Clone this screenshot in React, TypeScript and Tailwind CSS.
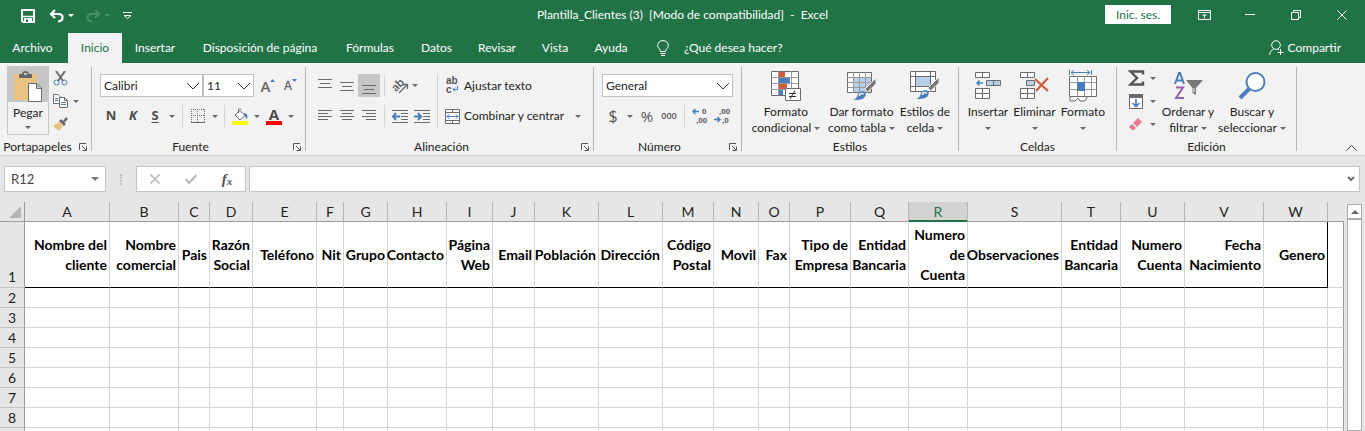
import React from "react";
import type { ReactNode } from "react";

const GRAY = "#6b6b6b";
const BLUE = "#4a7ebb";

function Svg({ w, h, children, stroke = GRAY }: { w: number; h: number; children: ReactNode; stroke?: string }) {
  return (
    <svg width={w} height={h} viewBox={`0 0 ${w} ${h}`} fill="none" stroke={stroke} className="block shrink-0" aria-hidden="true">
      {children}
    </svg>
  );
}

function Caret({ color = "#666" }: { color?: string }) {
  return (
    <svg width="6" height="3" viewBox="0 0 6 3" fill={color} className="block shrink-0" aria-hidden="true">
      <path d="M0 0H6L3 3Z" />
    </svg>
  );
}

function IconButton({ label, className = "w-[22px] h-[22px]", children }: { label: string; className?: string; children: ReactNode }) {
  return (
    <button type="button" aria-label={label} className={`flex shrink-0 items-center justify-center ${className}`}>
      {children}
    </button>
  );
}

function CaretButton({ label, className = "w-3" }: { label: string; className?: string }) {
  return (
    <IconButton label={label} className={`h-[22px] ${className}`}>
      <Caret />
    </IconButton>
  );
}

function Divider({ className = "h-[22px]" }: { className?: string }) {
  return <span className={`w-px shrink-0 bg-[#d2d2d2] ${className}`} />;
}

function Group({ title, width, launcher, children }: { title: string; width: string; launcher?: boolean; children: ReactNode }) {
  return (
    <section aria-label={title} className={`flex shrink-0 pt-1 ${width}`}>
      <div className="flex min-w-0 flex-1 flex-col">
        <div className="flex flex-1 items-start">{children}</div>
        <div className="flex h-4 items-center">
          <h2 className="flex-1 whitespace-nowrap text-center text-[12px] leading-4">{title}</h2>
          {launcher && (
            <IconButton label={`Opciones de ${title}`} className="h-4 w-4">
              <Svg w={8} h={8} stroke="#555">
                <path d="M.5 7V.5H7M3 3L7 7M7.5 3.5V7.5H3.5" />
              </Svg>
            </IconButton>
          )}
        </div>
      </div>
      <span className="mb-1 w-px bg-[#b4b4b4]" />
    </section>
  );
}

function BigButton({ icon, line1, line2, width }: { icon: ReactNode; line1: string; line2?: string; width: string }) {
  return (
    <button type="button" className={`flex shrink-0 flex-col items-center text-[12px] leading-4 ${width}`}>
      <span className="flex h-[37px] items-center justify-center">{icon}</span>
      <span className="whitespace-nowrap">{line1}</span>
      <span className="flex h-4 items-center gap-[3px] whitespace-nowrap">
        {line2}
        <Caret />
      </span>
    </button>
  );
}

function Lines({ rows }: { rows: [number, number, number][] }) {
  return (
    <Svg w={14} h={14}>
      {rows.map(([x1, x2, y]) => (
        <path key={y} d={`M${x1} ${y + 0.5}H${x2}`} />
      ))}
    </Svg>
  );
}

function BrushTip() {
  return (
    <>
      <path d="M29 6L18 17L20.500 20L29 12Z" fill="#787878" stroke="#f2f2f2" />
      <path d="M6 28C12 27 9 20 15 19C19 19 20 23 17 26C14 28 10 28 6 28Z" fill={BLUE} stroke="none" />
      <path d="M12.500 24C12 21 16 21 16.500 22.500" stroke="#f2f2f2" strokeWidth="1.500" />
    </>
  );
}

function FieldSelect({ label, value, width }: { label: string; value: string; width: string }) {
  return (
    <div className={`relative shrink-0 ${width}`}>
      <select
        aria-label={label}
        defaultValue={value}
        className="block h-[23px] w-full appearance-none border border-[#c0c0c0] bg-white pl-[3px] pr-5 text-[12px] leading-4 text-[#222] outline-none"
      >
        <option>{value}</option>
      </select>
      <span className="pointer-events-none absolute right-[3px] top-2">
        <Svg w={14} h={8} stroke="#333">
          <path d="M1 1L7 7L13 1" />
        </Svg>
      </span>
    </div>
  );
}

function TitleBar() {
  return (
    <header className="grid h-[33px] grid-cols-[1fr_auto_1fr] items-center pb-1 text-white">
      <div className="flex items-center pl-[21px] pt-[2px]">
        <IconButton label="Guardar" className="mr-[14px] h-5 w-[14px]">
          <svg width="14" height="14" viewBox="0 0 14 14" fill="none" stroke="#fff" strokeWidth="2" className="block">
            <path d="M1 1H13V13H2L1 12Z" />
            <path d="M1 7.5H13" strokeWidth="1.5" />
            <path d="M3 9H11V13H3Z" fill="#fff" stroke="none" />
            <path d="M5 10.5H7V13H5Z" fill="#217346" stroke="none" />
          </svg>
        </IconButton>
        <IconButton label="Deshacer" className="h-5 w-4">
          <svg width="16" height="14" viewBox="0 0 16 14" fill="none" stroke="#fff" strokeWidth="2.2" className="block">
            <path d="M6 1L2 5L6 9M2.5 5H9.5C15 5 15 12 9 12.5" />
          </svg>
        </IconButton>
        <IconButton label="Opciones de deshacer" className="h-5 w-3"><Caret color="#fff" /></IconButton>
        <IconButton label="Rehacer" className="ml-2 h-5 w-4">
          <svg width="16" height="14" viewBox="0 0 16 14" fill="none" stroke="#4a9168" strokeWidth="2" className="block">
            <path d="M10 1L14 5L10 9M13.5 5H6.5C1 5 1 12 7 12.5" />
          </svg>
        </IconButton>
        <IconButton label="Opciones de rehacer" className="h-5 w-3"><Caret color="#4a9168" /></IconButton>
        <IconButton label="Personalizar barra" className="ml-2 h-5 w-3">
          <Svg w={9} h={8} stroke="#fff"><path d="M0 .5H9M1 3.5H8L4.5 6.5Z" /></Svg>
        </IconButton>
      </div>
      <h1 className="whitespace-pre text-[12px] leading-4">{"Plantilla_Clientes (3)  [Modo de compatibilidad]  -  Excel"}</h1>
      <div className="flex items-center justify-end">
        <button type="button" className="mr-[26px] h-[19px] w-[66px] bg-white text-[12px] leading-4 text-[#217346]">Inic. ses.</button>
        <IconButton label="Opciones de la cinta" className="h-5 w-[14px]">
          <Svg w={13} h={10} stroke="#fff"><path d="M.5 .5H12.5V9.5H.5ZM.5 2.5H12.5M6.5 8.5V4.5M4.5 6L6.5 4L8.5 6" /></Svg>
        </IconButton>
        <IconButton label="Minimizar" className="ml-4 h-5 w-[46px]">
          <Svg w={10} h={1} stroke="#fff"><path d="M0 .5H10" /></Svg>
        </IconButton>
        <IconButton label="Restaurar" className="h-5 w-[46px]">
          <Svg w={10} h={10} stroke="#fff"><path d="M.5 2.5H7.5V9.5H.5ZM2.5 2V.5H9.5V7.5H8" /></Svg>
        </IconButton>
        <IconButton label="Cerrar" className="h-5 w-[46px]">
          <Svg w={10} h={10} stroke="#fff"><path d="M.5 .5L9.5 9.5M9.5 .5L.5 9.5" /></Svg>
        </IconButton>
      </div>
    </header>
  );
}

const TABS: [string, string][] = [
  ["Archivo", "w-[68px] pr-[3px]"],
  ["Inicio", "w-[54px] bg-[#f2f2f2] text-[#217346]"],
  ["Insertar", "w-[66px]"],
  ["Disposición de página", "w-[144px]"],
  ["Fórmulas", "w-[76px]"],
  ["Datos", "w-[57px]"],
  ["Revisar", "w-[64px]"],
  ["Vista", "w-[52px]"],
  ["Ayuda", "w-[60px]"],
];

function TabBar() {
  return (
    <nav aria-label="Cinta de opciones" className="flex h-[30px] items-stretch text-[12px] leading-4 text-white">
      {TABS.map(([name, cls]) => (
        <button key={name} type="button" className={`shrink-0 whitespace-nowrap text-center ${cls}`}>{name}</button>
      ))}
      <button type="button" className="ml-4 flex items-center gap-[15px] whitespace-nowrap">
        <Svg w={12} h={16} stroke="#fff">
          <path d="M3.500 11.500C3.500 9 .7 8.500 .7 5.500C.7 2.500 3 .6 6 .6C9 .6 11.300 2.500 11.300 5.500C11.300 8.500 8.500 9 8.500 11.500ZM3.500 13.500H8.500M4 15.500H8" />
        </Svg>
        ¿Qué desea hacer?
      </button>
      <button type="button" className="ml-auto mr-6 flex items-center gap-1 whitespace-nowrap">
        <Svg w={15} h={16} stroke="#fff">
          <circle cx="7" cy="5" r="4.300" />
          <path d="M.7 15C.7 12 2.500 10.300 4.500 9M9 9L10 10M11.500 9V15M8.500 12.500H14.500" />
        </Svg>
        Compartir
      </button>
    </nav>
  );
}

function Clipboard() {
  return (
    <Group title="Portapapeles" width="w-[92px]" launcher>
      <button type="button" className="-mt-px ml-[7px] flex h-[69px] w-[42px] shrink-0 flex-col items-center border border-[#c6c6c6] text-[12px] leading-4">
        <span className="flex h-[35px] w-full shrink-0 items-center justify-center bg-[#c6c6c6] pt-1">
          <Svg w={28} h={31}>
            <path d="M0 3H23V29H0Z" fill="#eac282" stroke="none" />
            <path d="M5 3H8C8 -1 15 -1 15 3H18V7H5Z" fill="#686868" stroke="none" />
            <path d="M10 2H13V4H10Z" fill="#c6c6c6" stroke="none" />
            <path d="M14.500 12.500H23L27.500 17V30.500H14.500ZM22.500 12.500V17.500H27.500" fill="#fff" />
          </Svg>
        </span>
        <span className="pt-[3px]">Pegar</span>
        <span className="flex flex-1 items-center"><Caret /></span>
      </button>
      <div className="ml-[3px] flex flex-col gap-[1px]">
        <IconButton label="Cortar" className="h-[22px] w-4">
          <Svg w={15} h={15}>
            <path d="M3 0L10 10M12 0L5 10" strokeWidth="2" />
            <circle cx="3.500" cy="11.500" r="2.500" stroke={BLUE} /><circle cx="11.500" cy="11.500" r="2.500" stroke={BLUE} />
          </Svg>
        </IconButton>
        <div className="flex">
          <IconButton label="Copiar" className="h-[22px] w-4">
            <Svg w={15} h={14}>
              <path d="M.5 .5H5L7.500 3V9.500H.5Z" fill="#fff" />
              <path d="M6.500 3.500H11.500L14.500 6.500V13.500H6.500ZM11.500 3.500V6.500H14.500" fill="#fff" />
              <path d="M2 4.500H5M2 6.500H5M8 8.500H13M8 10.500H13" stroke={BLUE} />
            </Svg>
          </IconButton>
          <CaretButton label="Opciones de copiar" className="w-4" />
        </div>
        <IconButton label="Copiar formato" className="h-[22px] w-4">
          <Svg w={15} h={14}>
            <path d="M0 9L6 5L10 9L6 14Z" fill="#eac282" stroke="none" />
            <path d="M6 4L8 2L13 7L11 9ZM10 4L13 0L15 2L11 6Z" fill="#686868" stroke="none" />
          </Svg>
        </IconButton>
      </div>
    </Group>
  );
}

function FontGroup() {
  return (
    <Group title="Fuente" width="w-[214px]" launcher>
      <div className="flex w-full flex-col gap-2 pl-2 pt-[7px]">
        <div className="flex items-center">
          <FieldSelect label="Fuente" value="Calibri" width="w-[103px]" />
          <FieldSelect label="Tamaño de fuente" value="11" width="w-[51px]" />
          <IconButton label="Aumentar tamaño" className="ml-[5px] h-[22px] w-[18px] font-['Open_Sans',sans-serif] text-[15px] font-semibold leading-5 text-[#666]">
            A<Svg w={5} h={14}><path d="M0 3H5L2.500 0Z" fill={BLUE} stroke="none" /></Svg>
          </IconButton>
          <IconButton label="Reducir tamaño" className="ml-[5px] h-[22px] w-[17px] font-['Open_Sans',sans-serif] text-[12px] font-semibold leading-5 text-[#666]">
            A<Svg w={5} h={14}><path d="M0 0H5L2.500 3Z" fill={BLUE} stroke="none" /></Svg>
          </IconButton>
        </div>
        <div className="flex items-center font-['Open_Sans',sans-serif] text-[13px] font-bold text-[#4c4c4c]">
          <IconButton label="Negrita">N</IconButton>
          <IconButton label="Cursiva"><span className="italic">K</span></IconButton>
          <IconButton label="Subrayado"><span className="underline underline-offset-2">S</span></IconButton>
          <CaretButton label="Tipos de subrayado" />
          <Divider className="ml-1 h-[22px]" />
          <IconButton label="Bordes" className="ml-1 h-[22px] w-[22px]">
            <Svg w={14} h={14}>
              <path d="M0 .5H14M0 6.500H14M.5 0V13M6.500 0V13M13.500 0V13" strokeDasharray="1 1" />
              <path d="M0 13.500H14" />
            </Svg>
          </IconButton>
          <CaretButton label="Opciones de borde" />
          <Divider className="ml-[3px] h-[22px]" />
          <IconButton label="Color de relleno" className="ml-1 h-[22px] w-[22px]">
            <Svg w={16} h={17}>
              <path d="M3 7L8 2.500L13 7.500L8 12ZM6.500 5V1.500C6.500 .5 9 .5 9 2" fill="#fff" />
              <path d="M12 5C15 5 16 8 15 11C13.500 10 13.500 8 12 7Z" fill={BLUE} stroke="none" />
              <path d="M0 13H16V17H0Z" fill="#ffff00" stroke="none" />
            </Svg>
          </IconButton>
          <CaretButton label="Colores de relleno" />
          <IconButton label="Color de fuente" className="h-[22px] w-[22px]">
            <span className="flex flex-col items-center text-[15px] leading-[13px]">A<span className="h-1 w-4 bg-[#f00]" /></span>
          </IconButton>
          <CaretButton label="Colores de fuente" />
        </div>
      </div>
    </Group>
  );
}

function AlignGroup() {
  return (
    <Group title="Alineación" width="w-[288px]" launcher>
      <div className="flex pl-2 pt-[7px]">
        <div className="flex flex-col gap-2">
          <div className="flex items-center">
            <IconButton label="Alinear arriba"><Lines rows={[[0, 14, 0], [2, 12, 4], [0, 14, 8]]} /></IconButton>
            <IconButton label="Alinear en el medio"><Lines rows={[[0, 14, 3], [2, 12, 7], [0, 14, 11]]} /></IconButton>
            <IconButton label="Alinear abajo" className="h-[23px] w-[22px] bg-[#c6c6c6] pt-[7px]"><Lines rows={[[0, 14, 3], [2, 12, 7], [0, 14, 11]]} /></IconButton>
            <Divider className="ml-1 h-[22px]" />
            <IconButton label="Orientación" className="ml-[4px] h-[22px] w-[22px]">
              <svg width="17" height="16" viewBox="0 0 17 16" className="block overflow-visible" aria-hidden="true">
                <text x="0" y="11" transform="rotate(-45 6 8)" fontSize="12" fontWeight="700" fill="#666">ab</text>
                <path d="M7 15L15 7M11 6.500H15.500V11" fill="none" stroke="#666" strokeWidth="1.300" />
              </svg>
            </IconButton>
            <CaretButton label="Opciones de orientación" className="w-2" />
          </div>
          <div className="flex items-center">
            <IconButton label="Alinear a la izquierda"><Lines rows={[[0, 14, 1], [0, 10, 4], [0, 14, 7], [0, 10, 10]]} /></IconButton>
            <IconButton label="Centrar"><Lines rows={[[0, 14, 1], [2, 12, 4], [0, 14, 7], [2, 12, 10]]} /></IconButton>
            <IconButton label="Alinear a la derecha"><Lines rows={[[0, 14, 1], [4, 14, 4], [0, 14, 7], [4, 14, 10]]} /></IconButton>
            <Divider className="ml-1 h-[22px]" />
            <IconButton label="Disminuir sangría" className="ml-[4px] h-[22px] w-[22px]">
              <Svg w={16} h={13}>
                <path d="M0 .5H16M9 3.500H16M9 6.500H16M9 9.500H16M0 12.500H16" />
                <path d="M8 6.500H1M4 3L1 6.500L4 10" stroke={BLUE} strokeWidth="2" />
              </Svg>
            </IconButton>
            <IconButton label="Aumentar sangría">
              <Svg w={16} h={13}>
                <path d="M0 .5H16M9 3.500H16M9 6.500H16M9 9.500H16M0 12.500H16" />
                <path d="M0 6.500H7M4 3L7 6.500L4 10" stroke={BLUE} strokeWidth="2" />
              </Svg>
            </IconButton>
          </div>
        </div>
        <Divider className="ml-1 h-[54px]" />
        <div className="flex flex-col gap-2 pl-[7px] text-[12px] leading-4">
          <button type="button" className="flex h-[23px] items-center gap-1 whitespace-nowrap">
            <svg width="15" height="17" viewBox="0 0 15 17" className="block overflow-visible" aria-hidden="true">
              <g fontFamily="Liberation Sans, sans-serif" fontSize="10" fontWeight="700" fill="#555">
                <text x="1" y="7">ab</text>
                <text x="1" y="16">c</text>
              </g>
              <path d="M12.500 9V12.500H8M10 10.500L8 12.500L10 14.500" fill="none" stroke={BLUE} />
            </svg>
            Ajustar texto
          </button>
          <div className="flex h-[22px] items-center">
            <button type="button" className="flex items-center gap-1 whitespace-nowrap">
              <Svg w={15} h={15}>
                <path d="M.5 .5H14.500V14.500H.5ZM.5 3.500H14.500M.5 11.500H14.500M7.500 .5V3.500M7.500 11.500V14.500" fill="#fff" />
                <path d="M2 7.500H13M4.500 5L2 7.500L4.500 10M10.500 5L13 7.500L10.500 10" stroke={BLUE} />
              </Svg>
              Combinar y centrar
            </button>
            <CaretButton label="Opciones de combinar" className="ml-2 w-3" />
          </div>
        </div>
      </div>
    </Group>
  );
}

function DecimalIcon({ more }: { more: boolean }) {
  return (
    <svg width="16" height="16" viewBox="0 0 16 16" className="block overflow-visible" aria-hidden="true">
      <g fontFamily="Liberation Sans, sans-serif" fontSize="8" fontWeight="700" fill="#555">
        <text x={more ? 10 : 5} y="6">{more ? "0" : ",00"}</text>
        <text x={more ? 4 : 8} y="15">{more ? ",00" : ",0"}</text>
      </g>
      <path d={more ? "M7 3.500H1M3.500 1L1 3.500L3.500 6" : "M0 11.500H6M3.500 9L6 11.500L3.500 14"} fill="none" stroke={BLUE} strokeWidth="1.500" />
    </svg>
  );
}

function NumberGroup() {
  return (
    <Group title="Número" width="w-[148px]" launcher>
      <div className="flex w-full flex-col gap-2 px-2 pt-[7px]">
        <FieldSelect label="Formato de número" value="General" width="w-full" />
        <div className="flex items-center font-['Open_Sans',sans-serif] text-[#555]">
          <IconButton label="Moneda" className="h-[22px] w-[22px] text-[16px]">$</IconButton>
          <CaretButton label="Opciones de moneda" />
          <IconButton label="Porcentaje" className="h-[22px] w-[22px] text-[15px]">%</IconButton>
          <IconButton label="Estilo millares" className="h-[22px] w-[22px] text-[9px] font-semibold">000</IconButton>
          <Divider className="ml-[4px] h-[22px]" />
          <IconButton label="Aumentar decimales" className="ml-1 h-[22px] w-[22px]"><DecimalIcon more /></IconButton>
          <IconButton label="Disminuir decimales"><DecimalIcon more={false} /></IconButton>
        </div>
      </div>
    </Group>
  );
}

function StylesGroup() {
  return (
    <Group title="Estilos" width="w-[217px]">
      <BigButton
        width="w-[88px]" line1="Formato" line2="condicional"
        icon={
          <Svg w={30} h={31}>
            <path d="M.5 1.500H27.500V25.500H.5Z" fill="#fff" />
            <path d="M8 2H14V7H8ZM8 14H16V19H8Z" fill="#d35b3c" stroke="none" />
            <path d="M8 8H19V13H8ZM8 20H12V25H8Z" fill={BLUE} stroke="none" />
            <path d="M.5 7.500H27.500M.5 13.500H27.500M.5 19.500H27.500M7.500 1V25M20.500 1V25" stroke="#999" />
            <path d="M14.500 18.500H29.500V30.500H14.500Z" fill="#fff" />
            <path d="M18 23.500H25M18 26.500H25M24 20.500L19 29" stroke="#333" />
          </Svg>
        }
      />
      <BigButton
        width="w-[63px]" line1="Dar formato" line2="como tabla"
        icon={
          <Svg w={30} h={31}>
            <g transform="translate(0 2)">
              <path d="M.5 .5H24.500V20.500H.5Z" fill="#fff" />
              <path d="M6 6H24V20H6Z" fill="#b8cfe8" stroke="none" />
              <path d="M.5 5.500H24.500M.5 10.500H24.500M.5 15.500H24.500M6.500 0V21M12.500 0V21M18.500 0V21" stroke="#999" />
              <BrushTip />
            </g>
          </Svg>
        }
      />
      <BigButton
        width="w-[64px]" line1="Estilos de" line2="celda"
        icon={
          <Svg w={30} h={29}>
            <path d="M.5 .5H25.500V20.500H.5ZM.5 5.500H25.500M.5 15.500H25.500M5.500 0V21M20.500 0V21" fill="#fff" />
            <path d="M6 6H20V15H6Z" fill="#b8cfe8" stroke="none" />
            <BrushTip />
          </Svg>
        }
      />
    </Group>
  );
}

function CellsGroup() {
  return (
    <Group title="Celdas" width="w-[158px]">
      <span className="w-[6px] shrink-0" />
      <BigButton
        width="w-[46px]" line1="Insertar"
        icon={
          <Svg w={26} h={27}>
            <path d="M.5 .5H14.500V5.500H.5ZM7.500 .5V5.500M.5 16.500H14.500V26.500H.5ZM7.500 16.500V26.500M.5 21.500H14.500" fill="#fff" />
            <path d="M11.500 8.500H25.500V13.500H11.500ZM18.500 8.500V13.500" fill="#b8cfe8" />
            <path d="M8 11H2M4.500 8.500L2 11L4.500 13.500" stroke={BLUE} strokeWidth="1.500" />
          </Svg>
        }
      />
      <BigButton
        width="w-[47px]" line1="Eliminar"
        icon={
          <Svg w={29} h={27}>
            <path d="M.5 .5H14.500V5.500H.5ZM7.500 .5V5.500M.5 16.500H14.500V26.500H.5ZM7.500 16.500V26.500M.5 21.500H14.500" fill="#fff" />
            <path d="M6.500 8.500H14.500V13.500H6.500Z" fill="#b8cfe8" />
            <path d="M15 7L28 19M28 6L16 19" stroke="#d35b3c" strokeWidth="2.200" />
          </Svg>
        }
      />
      <BigButton
        width="w-[50px]" line1="Formato"
        icon={
          <Svg w={28} h={32}>
            <path d="M.5 6.500H27.500V26.500H.5Z" fill="#fff" />
            <path d="M.5 12.500H27.500M.5 19.500H27.500M8.500 6V26M15.500 6V26M22.500 6V26" stroke="#999" />
            <path d="M8 12H16V21H8Z" fill={BLUE} stroke="none" />
            <path d="M.5 0V5M22.500 0V5M2 2.500H21M5 0L2 2.500L5 5M18 0L21 2.500L18 5" stroke={BLUE} />
            <path d="M1 27V31H6L9 28L11 31H16L18 27" fill="#fff" />
          </Svg>
        }
      />
    </Group>
  );
}

function EditGroup() {
  return (
    <Group title="Edición" width="w-[180px]">
      <div className="flex w-[42px] shrink-0 flex-col gap-[1px] pl-2">
        <div className="flex">
          <IconButton label="Autosuma" className="h-[22px] w-[22px]">
            <Svg w={17} h={16} stroke="#555"><path d="M15 4.500V1.500H2.500L9 8L2.500 14.500H15V11.500" strokeWidth="2.400" /></Svg>
          </IconButton>
          <CaretButton label="Opciones de autosuma" />
        </div>
        <div className="flex">
          <IconButton label="Rellenar" className="h-[22px] w-[22px]">
            <Svg w={14} h={15}>
              <path d="M.5 .5H13.500V14.500H.5Z" fill="#fff" /><path d="M0 0H14V4H0Z" fill={GRAY} stroke="none" />
              <path d="M7 5V12M3.500 9L7 12.500L10.500 9" stroke={BLUE} strokeWidth="1.700" />
            </Svg>
          </IconButton>
          <CaretButton label="Opciones de relleno" />
        </div>
        <div className="flex">
          <IconButton label="Borrar" className="h-[22px] w-[22px]">
            <Svg w={14} h={13}>
              <path d="M4 5L9 0L13 4L8 9Z" fill="#e67a8c" stroke="none" /><path d="M3 6L7 10L4 12.500L0 9Z" fill="#e67a8c" stroke="none" />
            </Svg>
          </IconButton>
          <CaretButton label="Opciones de borrar" />
        </div>
      </div>
      <BigButton
        width="w-[58px]" line1="Ordenar y" line2="filtrar"
        icon={
          <svg width="29" height="28" viewBox="0 0 29 28" className="block" aria-hidden="true">
            <path d="M1 12L5 1H6L10 12M2.500 8.500H8.500" fill="none" stroke={BLUE} strokeWidth="2" />
            <path d="M2 15.500H9L2 26H10" fill="none" stroke="#9461ad" strokeWidth="2" />
            <path d="M12 8H29L22 16V23L18.500 21V16Z" fill="#777" />
            <path d="M20 16V20" stroke="#fff" />
          </svg>
        }
      />
      <BigButton
        width="w-[70px]" line1="Buscar y" line2="seleccionar"
        icon={
          <Svg w={28} h={28} stroke={BLUE}>
            <circle cx="17.500" cy="10" r="9" fill="#fff" strokeWidth="2" /><path d="M11 17L2 26" strokeWidth="4" />
          </Svg>
        }
      />
    </Group>
  );
}

function FormulaBar() {
  return (
    <div className="flex items-center pb-[10px] pl-1 pr-[5px] pt-[10px]">
      <div className="flex h-[26px] w-[102px] shrink-0 items-center border border-[#c3c3c3] bg-white pr-[6px]">
        <input aria-label="Cuadro de nombres" defaultValue="R12" className="w-full min-w-0 bg-transparent pl-[6px] text-[13px] leading-4 text-[#444] outline-none" />
        <Svg w={8} h={4}><path d="M0 0H8L4 4Z" fill="#777" stroke="none" /></Svg>
      </div>
      <span className="flex w-[30px] shrink-0 justify-center">
        <Svg w={2} h={11}><path d="M0 1H2M0 4H2M0 7H2M0 10H2" strokeWidth="1" stroke="#999" /></Svg>
      </span>
      <div className="flex h-[26px] w-[110px] shrink-0 items-center justify-around border border-[#c3c3c3] bg-white">
        <IconButton label="Cancelar"><Svg w={10} h={10} stroke="#bbb"><path d="M.5 .5L9.500 9.500M9.500 .5L.5 9.500" strokeWidth="1.700" /></Svg></IconButton>
        <IconButton label="Introducir"><Svg w={12} h={10} stroke="#bbb"><path d="M.5 5L4 9L11.500 1" strokeWidth="2.200" /></Svg></IconButton>
        <IconButton label="Insertar función" className="h-[22px] w-[22px] font-['Liberation_Serif',serif] text-[15px] font-bold italic leading-4 text-[#555]">
          f<span className="pt-1 text-[11px]">x</span>
        </IconButton>
      </div>
      <div className="ml-[3px] flex h-[26px] min-w-0 flex-1 items-center border border-[#c3c3c3] bg-white pr-1">
        <input aria-label="Barra de fórmulas" className="min-w-0 flex-1 bg-transparent px-1 text-[12px] outline-none" />
        <Svg w={8} h={6}><path d="M1 1L4 4L7 1" strokeWidth="2" /></Svg>
      </div>
    </div>
  );
}

const COLUMNS: [string, number, string][] = [
  ["A", 85, "Nombre del cliente"],
  ["B", 69, "Nombre comercial"],
  ["C", 31, "Pais"],
  ["D", 43, "Razón Social"],
  ["E", 64, "Teléfono"],
  ["F", 27, "Nit"],
  ["G", 44, "Grupo"],
  ["H", 59, "Contacto"],
  ["I", 46, "Página Web"],
  ["J", 42, "Email"],
  ["K", 64, "Población"],
  ["L", 64, "Dirección"],
  ["M", 51, "Código Postal"],
  ["N", 45, "Movil"],
  ["O", 31, "Fax"],
  ["P", 61, "Tipo de Empresa"],
  ["Q", 58, "Entidad Bancaria"],
  ["R", 59, "Numero de Cuenta"],
  ["S", 94, "Observaciones"],
  ["T", 59, "Entidad Bancaria"],
  ["U", 64, "Numero Cuenta"],
  ["V", 79, "Fecha Nacimiento"],
  ["W", 64, "Genero"],
];
const ROWS = [2, 3, 4, 5, 6, 7, 8];

function Sheet() {
  return (
    <div className="flex min-h-0 flex-1 items-stretch">
      <div className="min-w-0 flex-1 overflow-hidden">
        <table className="w-full table-fixed border-separate border-spacing-0 text-[#222]">
          <colgroup>
            <col style={{ width: 25 }} />
            {COLUMNS.map(([id, w]) => <col key={id} style={{ width: w }} />)}
            <col />
          </colgroup>
          <thead>
            <tr className="h-5 text-[14px] leading-[18px]">
              <td className="border-b border-r border-[#9b9b9b] p-0">
                <button type="button" aria-label="Seleccionar todo" className="ml-auto mr-[3px] block w-3">
                  <Svg w={12} h={12}><path d="M12 0V12H0Z" fill="#b4b4b4" stroke="none" /></Svg>
                </button>
              </td>
              {COLUMNS.map(([id]) => (
                <th
                  key={id}
                  scope="col"
                  className={`border-b border-r border-r-[#b5b5b5] p-0 text-center font-normal ${id === "R" ? "border-b-[#217346] bg-[#d2d2d2] text-[#217346] shadow-[inset_0_-1px_0_#217346]" : "border-b-[#9b9b9b]"}`}
                >
                  {id}
                </th>
              ))}
              <td className="border-b border-[#9b9b9b] p-0" />
            </tr>
          </thead>
          <tbody>
            <tr className="h-[66px] text-[14px] leading-5">
              <th scope="row" className="border-b border-r border-b-[#c3c3c3] border-r-[#9b9b9b] p-0 text-center align-bottom font-normal">1</th>
              {COLUMNS.map(([id, , text]) => (
                <td key={id} className={`border-b border-r border-b-black bg-white p-0 pr-[2px] text-right font-bold text-black ${id === "W" ? "border-r-black" : "border-r-[#d4d4d4]"}`}>
                  <div className="flex justify-end">{text}</div>
                </td>
              ))}
              <td className="border-b border-r border-b-[#d4d4d4] border-r-[#9b9b9b] bg-white p-0" />
            </tr>
            {[...ROWS, 0].map((n) => (
              <tr key={n} className="h-5 text-[14px] leading-[18px]">
                <th scope="row" className="border-b border-r border-b-[#c3c3c3] border-r-[#9b9b9b] p-0 text-center font-normal">{n || null}</th>
                {COLUMNS.map(([id]) => <td key={id} className="border-b border-r border-[#d4d4d4] bg-white p-0" />)}
                <td className="border-b border-r border-b-[#d4d4d4] border-r-[#9b9b9b] bg-white p-0" />
              </tr>
            ))}
          </tbody>
        </table>
      </div>
      <div className="flex w-[21px] shrink-0 flex-col px-[3px] pt-[2px]">
        <button type="button" aria-label="Desplazar hacia arriba" className="flex h-[15px] shrink-0 items-center justify-center border border-[#ababab] bg-white">
          <Svg w={8} h={4}><path d="M0 4H8L4 0Z" fill="#666" stroke="none" /></Svg>
        </button>
        <div className="flex-1 border border-[#ababab] bg-white" />
      </div>
    </div>
  );
}

export default function App() {
  return (
    <div className="flex h-screen flex-col overflow-hidden bg-[#e6e6e6] font-[Lato,'Noto_Sans',sans-serif] text-[#222]">
      <div className="shrink-0 bg-[#217346]">
        <TitleBar />
        <TabBar />
      </div>
      <div className="flex h-[93px] shrink-0 border-b border-[#d0d0d0] bg-[#f2f2f2]">
        <Clipboard />
        <FontGroup />
        <AlignGroup />
        <NumberGroup />
        <StylesGroup />
        <CellsGroup />
        <EditGroup />
        <div className="flex flex-1 items-end justify-end pb-px pr-2">
          <IconButton label="Contraer la cinta" className="h-3 w-3">
            <Svg w={11} h={6} stroke="#444"><path d="M.5 5.500L5.500 .5L10.500 5.500" /></Svg>
          </IconButton>
        </div>
      </div>
      <FormulaBar />
      <Sheet />
    </div>
  );
}
